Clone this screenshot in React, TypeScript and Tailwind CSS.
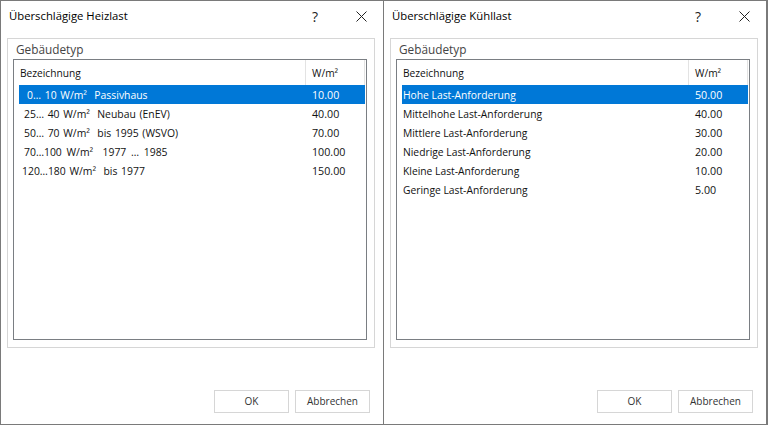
const font = { fontFamily: '"Open Sans", "Noto Sans", sans-serif' }

type Row = { label: string; value: string; indent: string }

const heat: Row[] = [
  { label: "0… 10 W/m²  Passivhaus", value: "10.00", indent: "pl-[8px] text-[10.4px] [word-spacing:1px]" },
  { label: "25… 40 W/m²  Neubau (EnEV)", value: "40.00", indent: "pl-[5px] text-[10.4px] [word-spacing:1px]" },
  { label: "50… 70 W/m²  bis 1995 (WSVO)", value: "70.00", indent: "pl-[5px] text-[10.4px] [word-spacing:1px]" },
  { label: "70…100 W/m²  1977 … 1985", value: "100.00", indent: "pl-[5px] text-[10.4px] [word-spacing:2px]" },
  { label: "120…180 W/m²  bis 1977", value: "150.00", indent: "pl-[3px] text-[10.4px] [word-spacing:1px]" },
]

const cool: Row[] = [
  { label: "Hohe Last-Anforderung", value: "50.00", indent: "pl-[1px] text-[10.3px]" },
  { label: "Mittelhohe Last-Anforderung", value: "40.00", indent: "pl-[1px] text-[10.3px]" },
  { label: "Mittlere Last-Anforderung", value: "30.00", indent: "pl-[1px] text-[10.3px]" },
  { label: "Niedrige Last-Anforderung", value: "20.00", indent: "pl-[1px] text-[10.3px]" },
  { label: "Kleine Last-Anforderung", value: "10.00", indent: "pl-[1px] text-[10.3px]" },
  { label: "Geringe Last-Anforderung", value: "5.00", indent: "pl-[1px] text-[10.3px]" },
]

function Dialog({ title, rows, className }: { title: string; rows: Row[]; className: string }) {
  return (
    <div className={`flex h-[425px] flex-col border-y border-l border-[#7a7a7a] bg-white ${className}`}>
      <div className="flex h-[37px] shrink-0 items-center justify-between pb-[6px] pl-[8px]">
        <span className="text-[11.3px] text-black whitespace-pre">{title}</span>
        <div className="flex w-[55px] items-center justify-between">
          <span className="text-[14px] leading-none text-[#222]">?</span>
          <svg width="11" height="11" viewBox="0 0 11 11" fill="none" stroke="#222" strokeWidth="1">
            <path d="M0.5 0.5 10.5 10.5M10.5 0.5 0.5 10.5" />
          </svg>
        </div>
      </div>

      <div className="ml-[6px] flex h-[310px] w-[368px] flex-col border border-[#d6d6d6] pl-[5px] pr-[7px] pb-[7px]">
        <div className="h-[20px] shrink-0 pl-[3px] text-[11.8px] leading-[20px] text-[#444]">Gebäudetyp</div>
        <div className="flex flex-1 flex-col border border-[#7a7e83] pl-[5px] pr-[1px]">
          <div className="flex h-[25px] shrink-0 items-stretch text-[10.2px] text-[#111]">
            <div className="flex flex-1 items-center border-r border-[#e3e3e3] pl-[1px] pt-[2px]">Bezeichnung</div>
            <div className="flex w-[59px] items-center border-r border-[#e3e3e3] pl-[6px] pt-[2px]">W/m²</div>
          </div>
          {rows.map((r, i) => (
            <div
              key={r.label}
              className={`flex h-[19px] shrink-0 items-center pt-[1px] ${i === 0 ? "bg-[#0078d7] text-white" : "text-[#111]"}`}
            >
              <span className={`flex-1 whitespace-pre pt-[1px] ${r.indent}`}>{r.label}</span>
              <span className="w-[59px] pl-[6px] text-[10.7px]">{r.value}</span>
            </div>
          ))}
        </div>
      </div>

      <div className="mt-[42px] flex w-[369px] justify-end gap-[6px]">
        <button className="h-[23px] w-[75px] border border-[#d6d6d6] text-[10px] text-[#333]">OK</button>
        <button className="h-[23px] w-[75px] border border-[#d6d6d6] text-[10px] text-[#333]">Abbrechen</button>
      </div>
    </div>
  )
}

export default function App() {
  return (
    <div className="flex h-[425px] w-[768px] overflow-hidden bg-white" style={font}>
      <Dialog title="Überschlägige Heizlast" rows={heat} className="w-[383px] pr-[16px]" />
      <Dialog title="Überschlägige Kühllast" rows={cool} className="w-[385px] border-r-2 pr-[16px]" />
    </div>
  )
}
